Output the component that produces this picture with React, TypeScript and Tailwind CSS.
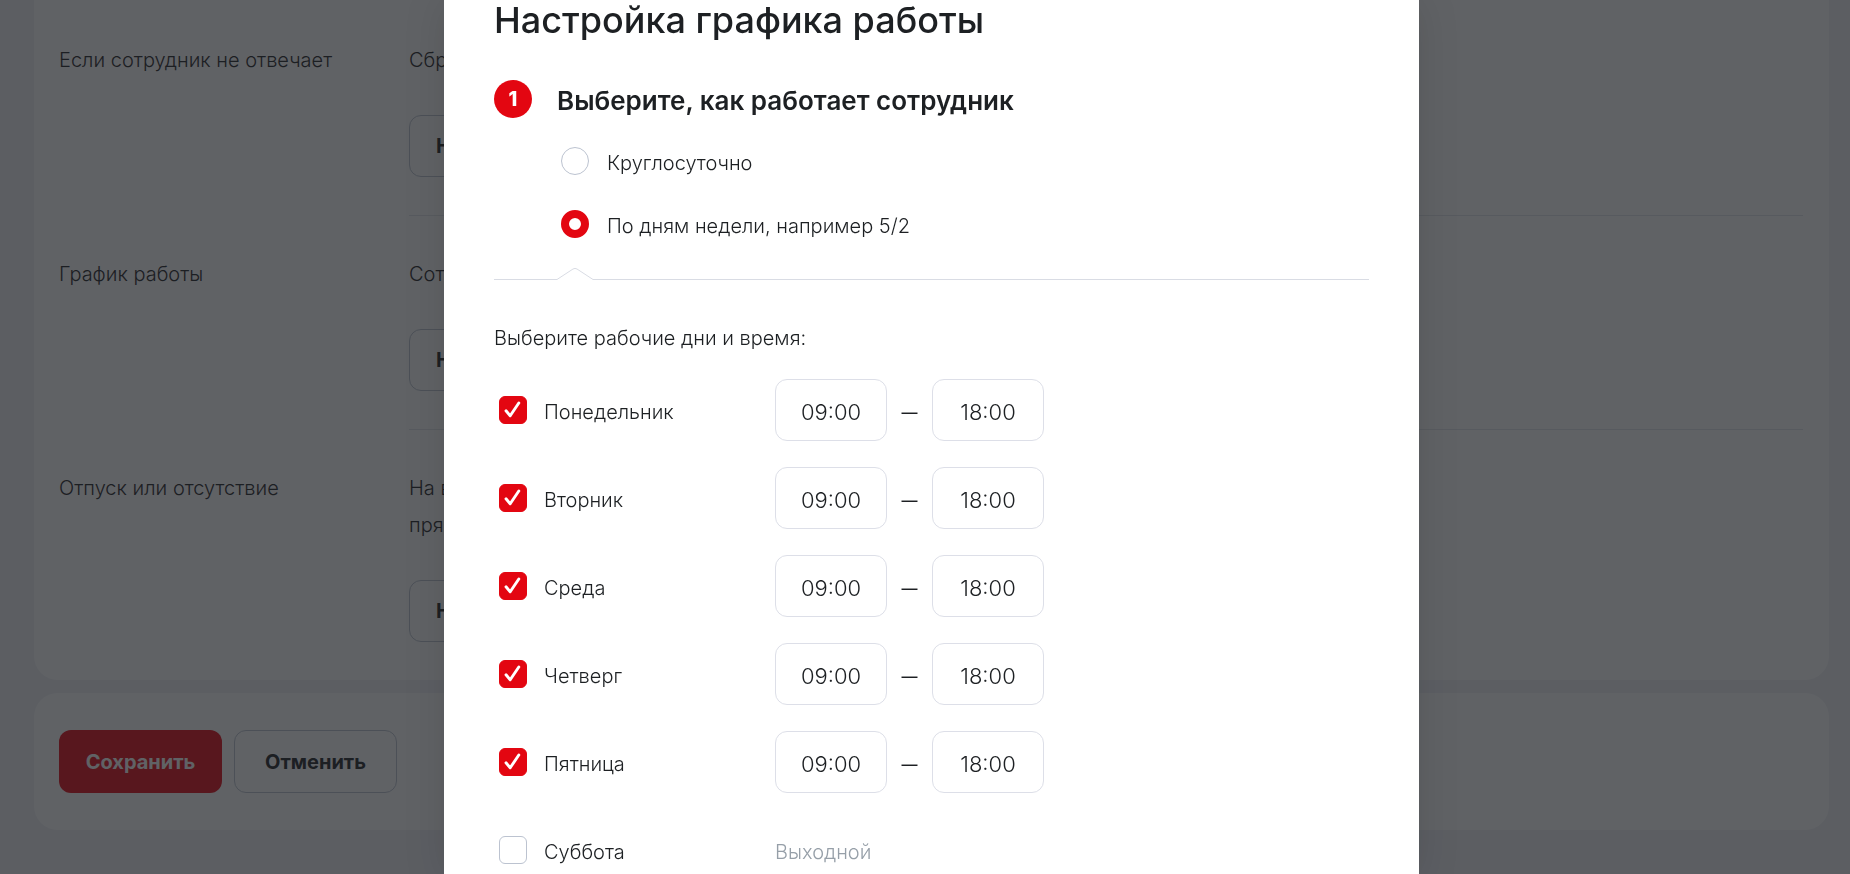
import React, { useState } from 'react';

type Day = {
  name: string;
  enabled: boolean;
  from: string;
  to: string;
};

type Setting = {
  label: string;
  lines: string[];
};

const settings: Setting[] = [
  { label: 'Если сотрудник не отвечает', lines: ['Сбросить'] },
  { label: 'График работы', lines: ['Сотрудник'] },
  { label: 'Отпуск или отсутствие', lines: ['На весь', 'прямо'] },
];

const initialDays: Day[] = [
  { name: 'Понедельник', enabled: true, from: '09:00', to: '18:00' },
  { name: 'Вторник', enabled: true, from: '09:00', to: '18:00' },
  { name: 'Среда', enabled: true, from: '09:00', to: '18:00' },
  { name: 'Четверг', enabled: true, from: '09:00', to: '18:00' },
  { name: 'Пятница', enabled: true, from: '09:00', to: '18:00' },
  { name: 'Суббота', enabled: false, from: '09:00', to: '18:00' },
];

const SettingsPage: React.FC = () => (
  <div className="min-h-screen bg-[#f1f2f6] pl-[34px] pr-[21px]">
    <section className="rounded-b-3xl bg-white pl-[25px] pr-[26px] pt-[2px]">
      {settings.map((item, index) => (
        <div key={item.label} className="flex text-[20px] leading-[37px]">
          <div className="w-[350px] shrink-0 pt-10">{item.label}</div>
          <div
            className={`flex-1 pt-10 pb-[38px] ${
              index < settings.length - 1 ? 'border-b border-[#e2e5eb]' : ''
            }`}
          >
            {item.lines.map((line) => (
              <p key={line}>{line}</p>
            ))}
            <button
              type="button"
              className="mt-9 block h-[62px] rounded-xl border border-[#bcc3d0] px-[26px] font-bold"
            >
              Настроить
            </button>
          </div>
        </div>
      ))}
    </section>

    <section className="mt-[13px] flex gap-3 rounded-3xl bg-white px-[25px] py-[37px] text-[20px] font-bold">
      <button type="button" className="h-[63px] w-[163px] rounded-xl bg-[#e30611] text-white">
        Сохранить
      </button>
      <button type="button" className="h-[63px] w-[163px] rounded-xl border border-[#bcc3d0]">
        Отменить
      </button>
    </section>
  </div>
);

type TimeProps = {
  label: string;
  value: string;
  onChange: (value: string) => void;
};

const TimeInput: React.FC<TimeProps> = ({ label, value, onChange }) => (
  <input
    type="text"
    aria-label={label}
    value={value}
    onChange={(e) => onChange(e.target.value)}
    className="h-[62px] w-[112px] rounded-xl border border-[#dddfe8] bg-white pt-1 text-center text-[22px] focus:outline-none"
  />
);

const ScheduleModal: React.FC = () => {
  const [mode, setMode] = useState('week');
  const [days, setDays] = useState<Day[]>(initialDays);

  const updateDay = (name: string, patch: Partial<Day>) => {
    setDays(prev => prev.map(day => (day.name === name ? { ...day, ...patch } : day)));
  };

  const modes = [
    { id: 'always', title: 'Круглосуточно' },
    { id: 'week', title: 'По дням недели, например 5/2' },
  ];

  return (
    <div className="fixed inset-0 flex justify-center overflow-hidden bg-[rgba(29,32,35,0.7)] pl-[34px] pr-[21px]">
      <div
        role="dialog"
        aria-modal="true"
        aria-labelledby="schedule-title"
        className="h-max min-h-full w-full max-w-[975px] bg-white px-[50px] shadow-[0_0_40px_rgba(0,0,0,0.12)]"
      >
        <h1 id="schedule-title" className="text-[36px] leading-10 font-[550]">
          Настройка графика работы
        </h1>

        <div className="mt-10 flex items-center gap-[25px]">
          <span className="flex size-[38px] items-center justify-center rounded-full bg-[#e30611] text-[20px] font-extrabold text-white">
            1
          </span>
          <h2 className="pt-1 text-[26px] leading-[34px] font-semibold">
            Выберите, как работает сотрудник
          </h2>
        </div>

        <div className="mt-[29px] flex flex-col gap-[35px] pl-[67px]">
          {modes.map(({ id, title }) => (
            <label key={id} className="flex h-7 items-center gap-[18px] text-[20px]">
              <input
                type="radio"
                name="mode"
                checked={mode === id}
                onChange={() => setMode(id)}
                className="size-7 appearance-none rounded-full border border-[#bcc3d0] bg-white checked:border-8 checked:border-[#e30611]"
              />
              <span className="pt-1">{title}</span>
            </label>
          ))}
        </div>

        {/* Divider with a notch under the radio buttons */}
        <div className="mt-[29px] flex items-end">
          <div className="h-px w-[63px] bg-[#d9dce4]" />
          <svg width="36" height="13" viewBox="0 0 36 13" fill="none" stroke="#d9dce4">
            <path d="M0 12.5 L16 2 Q18 .8 20 2 L36 12.5" />
          </svg>
          <div className="h-px flex-1 bg-[#d9dce4]" />
        </div>

        <p className="mt-[41px] text-[20px] leading-[34px]">Выберите рабочие дни и время:</p>

        <div className="mt-6 flex flex-col gap-[26px] text-[20px]">
          {days.map(day => (
            <div key={day.name} className="flex h-[62px] items-center">
              <label className="flex w-[281px] items-center gap-[17px] pl-[5px]">
                <span className="grid size-7">
                  <input
                    type="checkbox"
                    checked={day.enabled}
                    onChange={(e) => updateDay(day.name, { enabled: e.target.checked })}
                    className="peer col-start-1 row-start-1 size-7 appearance-none rounded-md border border-[#bcc3d0] bg-white checked:border-[#e30611] checked:bg-[#e30611]"
                  />
                  <svg
                    viewBox="0 0 28 28"
                    className="pointer-events-none invisible col-start-1 row-start-1 size-7 peer-checked:visible"
                    fill="none"
                    stroke="#fff"
                    strokeWidth="2.9"
                    strokeLinecap="round"
                    strokeLinejoin="round"
                  >
                    <path d="M7 14.8 L11.2 19.8 L19.8 7" />
                  </svg>
                </span>
                <span className="pt-1">{day.name}</span>
              </label>
              {day.enabled ? (
                <div className="flex items-center gap-[14px]">
                  <TimeInput
                    label={`${day.name}, начало`}
                    value={day.from}
                    onChange={(from) => updateDay(day.name, { from })}
                  />
                  <span className="flex w-[17px] justify-center pt-1 text-[16px] font-medium">—</span>
                  <TimeInput
                    label={`${day.name}, конец`}
                    value={day.to}
                    onChange={(to) => updateDay(day.name, { to })}
                  />
                </div>
              ) : (
                <span className="pt-1 text-[#969fa8]">Выходной</span>
              )}
            </div>
          ))}
        </div>
      </div>
    </div>
  );
};

const App: React.FC = () => (
  <div className="font-['Inter','Liberation_Sans',sans-serif] font-[350] text-[#1d2023]">
    <SettingsPage />
    <ScheduleModal />
  </div>
);

export default App;
